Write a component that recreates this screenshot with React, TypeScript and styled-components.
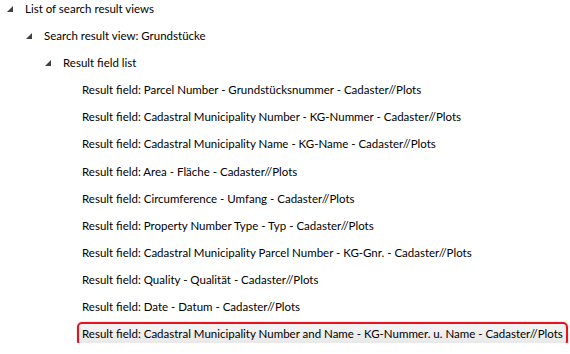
import React from 'react';
import styled, {createGlobalStyle} from 'styled-components';

const GlobalStyle = createGlobalStyle`
  html, body {
    margin: 0;
    padding: 0;
    background: #ffffff;
  }
  body {
    font-family: "Segoe UI", Lato, "Liberation Sans", sans-serif;
    font-size: 11.5px;
    color: #000;
  }
`

const fields: string[] = [
    'Parcel Number - Grundstücksnummer - Cadaster//Plots',
    'Cadastral Municipality Number - KG-Nummer - Cadaster//Plots',
    'Cadastral Municipality Name - KG-Name - Cadaster//Plots',
    'Area - Fläche - Cadaster//Plots',
    'Circumference - Umfang - Cadaster//Plots',
    'Property Number Type - Typ - Cadaster//Plots',
    'Cadastral Municipality Parcel Number - KG-Gnr. - Cadaster//Plots',
    'Quality - Qualität - Cadaster//Plots',
    'Date - Datum - Cadaster//Plots',
    'Cadastral Municipality Number and Name - KG-Nummer. u. Name - Cadaster//Plots',
]

const Tree = styled.ul`
  list-style: none;
  margin: 0;
  padding: 0;
  display: flex;
  flex-direction: column;
  gap: 9.1px;
`

const Row = styled.li<{ $level: number }>`
  display: flex;
  align-items: center;
  height: 18px;
  padding-left: ${p => 6 + p.$level * 19}px;
`

const Toggle = styled.span`
  width: 19px;
  height: 18px;
  display: flex;
  align-items: center;
  flex-shrink: 0;
  padding-left: 1px;
  box-sizing: border-box;
`

const Label = styled.span<{ $selected?: boolean }>`
  white-space: nowrap;
  line-height: 18px;
  padding: 1px 3px;
  margin-left: -5px;
  border: 2px solid ${p => p.$selected ? '#e8121e' : 'transparent'};
  border-radius: 5px;
  background: ${p => p.$selected ? 'linear-gradient(#f4f4f4, #e8e8e8)' : 'transparent'};
  box-shadow: ${p => p.$selected ? '0 0 2px rgba(0,0,0,0.25)' : 'none'};
`

const Expanded = () => (
    <svg width="6" height="6" viewBox="0 0 6 6">
        <polygon points="6,0 6,6 0,6" fill="#404040"/>
    </svg>
)

const App = () => {
    return (
        <>
            <GlobalStyle/>
            <Tree>
                <Row $level={0}><Toggle><Expanded/></Toggle><Label>List of search result views</Label></Row>
                <Row $level={1}><Toggle><Expanded/></Toggle><Label>Search result view: Grundstücke</Label></Row>
                <Row $level={2}><Toggle><Expanded/></Toggle><Label>Result field list</Label></Row>
                {fields.map((f, i) => <Row key={i} $level={3}>
                    <Toggle/>
                    <Label $selected={i === fields.length - 1}>Result field: {f}</Label>
                </Row>)}
            </Tree>
        </>
    );
};

export default App;
